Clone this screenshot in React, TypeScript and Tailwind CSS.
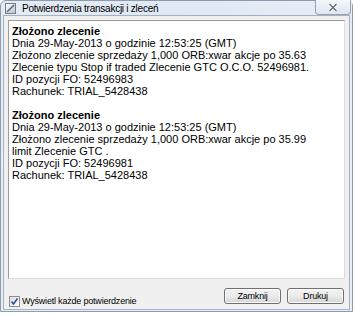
import React from 'react';

const blocks = [
  {
    lines: [
      'Dnia 29-May-2013 o godzinie 12:53:25 (GMT)',
      'Złożono zlecenie sprzedaży 1,000 ORB:xwar akcje po 35.63',
      'Zlecenie typu Stop if traded Zlecenie GTC O.C.O. 52496981.',
      'ID pozycji FO: 52496983',
      'Rachunek: TRIAL_5428438',
    ],
  },
  {
    lines: [
      'Dnia 29-May-2013 o godzinie 12:53:25 (GMT)',
      'Złożono zlecenie sprzedaży 1,000 ORB:xwar akcje po 35.99',
      'limit Zlecenie GTC .',
      'ID pozycji FO: 52496981',
      'Rachunek: TRIAL_5428438',
    ],
  },
];

const WinButton: React.FC<{ label: string }> = ({ label }) => (
  <button className="w-[57px] h-[16px] rounded-[3px] border border-[#707070] bg-gradient-to-b from-[#f2f2f2] via-[#ebebeb] to-[#d4d4d4] text-[9px] tracking-[-0.2px] text-black leading-none shadow-[inset_0_0_0_1px_#fcfcfc]">
    {label}
  </button>
);

const App: React.FC = () => {
  return (
    <div className="w-[355px] h-[316px] bg-white" style={{ fontFamily: '"Liberation Sans", Arial, sans-serif' }}>
      <div className="w-[353px] h-[312px] flex flex-col rounded-t-[6px] border border-[#8e9bad] bg-gradient-to-b from-[#e3ebf5] via-[#eaf0f7] to-[#e6edf6]">
        {/* title bar */}
        <div className="h-[18px] flex items-start relative bg-gradient-to-r from-transparent via-[#dfe8f4] to-[#e8eef6]">
          <div className="mt-[2px] ml-[4px] w-[11px] h-[11px] border border-[#7a7a7a] bg-gradient-to-br from-[#ffffff] to-[#b8c4d2] flex items-center justify-center">
            <svg width="9" height="9" viewBox="0 0 9 9">
              <path d="M1 8 L8 1" stroke="#5a6a80" strokeWidth="1.6" />
            </svg>
          </div>
          <span className="ml-[6px] mt-[2px] text-[10px] tracking-[-0.25px] text-black leading-[12px]">
            Potwierdzenia transakcji i zleceń
          </span>
          <div className="absolute right-[1px] top-[-1px] w-[36px] h-[15px] rounded-b-[4px] border border-[#98a4b4] border-t-0 bg-gradient-to-b from-[#f4f7fb] to-[#dfe6ef] flex items-center justify-center">
            <svg width="10" height="9" viewBox="0 0 10 9">
              <path d="M1.5 1 L8.5 8 M8.5 1 L1.5 8" stroke="#ffffff" strokeWidth="3" />
              <path d="M1.5 1 L8.5 8 M8.5 1 L1.5 8" stroke="#5b6675" strokeWidth="1.3" />
            </svg>
          </div>
        </div>
        {/* client area */}
        <div className="flex-1 mx-[2px] mb-[2px] border border-[#a5b1c0] bg-[#f0f0f0] flex flex-col">
          <div className="mx-[4px] mt-[4px] h-[259px] border border-[#9c9c9c] border-r-[#dcdcdc] border-b-[#dcdcdc] bg-white px-[3px] pt-[4px] text-[11px] leading-[12px] text-black">
            {blocks.map((b, i) => (
              <div key={i} className={i > 0 ? 'mt-[12px]' : ''}>
                <div className="font-bold">Złożono zlecenie</div>
                {b.lines.map((l, j) => (
                  <div key={j} className="whitespace-nowrap">{l}</div>
                ))}
              </div>
            ))}
          </div>
          <div className="flex-1 flex items-start px-[5px]">
            <label className="mt-[16px] flex items-center gap-[2px] text-[9px] tracking-[-0.2px] text-black">
              <span className="w-[11px] h-[11px] border border-[#8f8f8f] bg-gradient-to-br from-[#dcdcdc] to-[#ffffff] flex items-center justify-center">
                <svg width="9" height="9" viewBox="0 0 9 9">
                  <path d="M1.5 4.5 L3.5 7 L7.5 1.5" stroke="#2f4f9a" strokeWidth="1.6" fill="none" />
                </svg>
              </span>
              Wyświetl każde potwierdzenie
            </label>
            <div className="ml-auto mt-[9px] flex gap-[6px]">
              <WinButton label="Zamknij" />
              <WinButton label="Drukuj" />
            </div>
          </div>
        </div>
      </div>
    </div>
  );
};

export default App;
